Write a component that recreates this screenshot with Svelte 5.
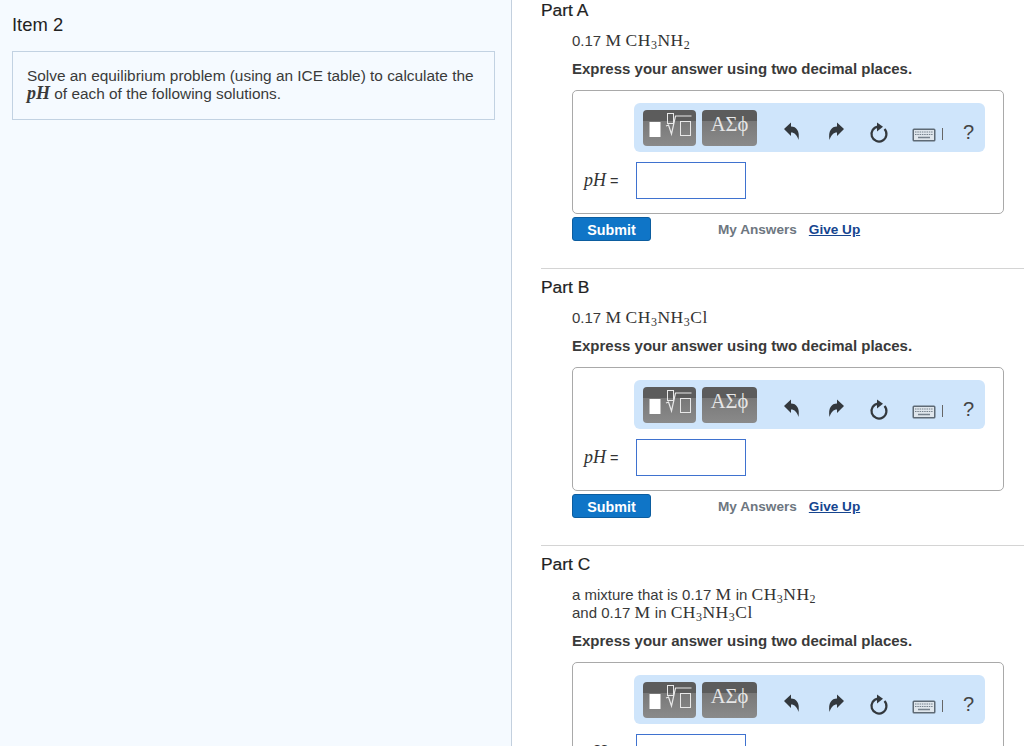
<script lang="ts">
	const answer = 'Express your answer using two decimal places.'
</script>

{#snippet ch3nh2()}
	<span class="math">CH<sub>3</sub>NH<sub>2</sub></span>
{/snippet}

{#snippet ch3nh3cl()}
	<span class="math">CH<sub>3</sub>NH<sub>3</sub>Cl</span>
{/snippet}

{#snippet toolbar()}
	<div class="toolbar">
		<div class="tool templates">
			<svg width="53" height="36" viewBox="0 0 53 36" fill="none">
				<rect x="6.5" y="12" width="11" height="15" fill="#fff" />
				<rect x="24.5" y="3.5" width="6" height="10" stroke="#e8e8e8" />
				<path d="M23 16l2.500-1 3 9 4-18h16" stroke="#e8e8e8" stroke-width="1.200" />
				<rect x="37.5" y="11.5" width="10" height="14" stroke="#e8e8e8" />
			</svg>
		</div>
		<div class="tool symbols">ΑΣϕ</div>
		<div class="action first">
			<svg width="18" height="20" viewBox="0 0 18 20">
				<path d="M1 8L8 1.500V5.500C13.500 5.500 17 10 15.500 19 14 14 11.500 11.500 8 11.500V15z" fill="#33383d" />
			</svg>
		</div>
		<div class="action">
			<svg width="18" height="20" viewBox="0 0 18 20">
				<path d="M17 8L10 1.500V5.500C4.500 5.500 1 10 2.500 19 4 14 6.500 11.500 10 11.500V15z" fill="#33383d" />
			</svg>
		</div>
		<div class="action reset">
			<svg width="22" height="24" viewBox="0 0 22 24" fill="none">
				<path d="M10 6.600A7.500 7.500 0 1 0 16.500 9" stroke="#33383d" stroke-width="2.200" />
				<path d="M9 2.500L15 6.800 9 11.500z" fill="#33383d" />
			</svg>
		</div>
		<div class="action keyboard">
			<svg width="24" height="14" viewBox="0 0 24 14">
				<rect x=".5" y=".5" width="23" height="13" rx="1.500" fill="#5e6a75" />
				<rect x="2" y="2" width="20" height="10" fill="#dfe6ec" />
				<path d="M3 4h18M3 6.500h18" stroke="#76828d" stroke-dasharray="1.500 .8" />
				<path d="M6 9.500h12" stroke="#76828d" stroke-width="1.500" />
			</svg>
		</div>
		<span class="pipe"></span>
		<span class="help">?</span>
	</div>
{/snippet}

{#snippet part(title, statement)}
	<section class="part">
		<h2>{title}</h2>
		<div class="statement">{@render statement()}</div>
		<p class="instruction">{answer}</p>
		<div class="editor">
			{@render toolbar()}
			<div class="answer-row">
				<span class="label"><i>pH</i> =</span>
				<div class="answer-input"></div>
			</div>
		</div>
		<div class="actions">
			<button class="submit">Submit</button>
			<span class="my-answers">My Answers</span>
			<a href="#give-up" class="give-up">Give Up</a>
		</div>
	</section>
{/snippet}

{#snippet partA()}0.17 <span class="math">M</span> {@render ch3nh2()}{/snippet}
{#snippet partB()}0.17 <span class="math">M</span> {@render ch3nh3cl()}{/snippet}
{#snippet partC()}
	a mixture that is 0.17 <span class="math">M</span> in {@render ch3nh2()}<br />
	and 0.17 <span class="math">M</span> in {@render ch3nh3cl()}
{/snippet}

<div class="page">
	<aside class="left">
		<h1>Item 2</h1>
		<div class="intro">
			Solve an equilibrium problem (using an ICE table) to calculate the
			<i class="ph">pH</i> of each of the following solutions.
		</div>
	</aside>
	<main class="right">
		{@render part('Part A', partA)}
		{@render part('Part B', partB)}
		{@render part('Part C', partC)}
	</main>
</div>

<style>
	:global(body) {
		margin: 0;
		background: #fff;
	}

	.page {
		display: flex;
		height: 746px;
		overflow: hidden;
		font-family: 'Liberation Sans', Arial, sans-serif;
		color: #3a3a3a;
	}

	.left {
		box-sizing: border-box;
		width: 512px;
		flex: none;
		padding: 14px 16px 0 12px;
		background: #f5faff;
		border-right: 1px solid #c3d0de;
	}

	h1 {
		margin: 0 0 15px;
		font-size: 18.4px;
		font-weight: 400;
		line-height: 22px;
		color: #222;
	}

	.intro {
		padding: 15px 14px 16px;
		border: 1px solid #c2d2e2;
		font-size: 15.4px;
		line-height: 18px;
	}

	.ph {
		font-family: 'Liberation Serif', serif;
		font-size: 18px;
		font-weight: 700;
		line-height: 0;
	}

	.right {
		flex: 1;
		min-width: 0;
		padding-left: 29px;
	}

	.part {
		height: 268px;
		margin-bottom: 8px;
		border-bottom: 1px solid #d4d4d4;
	}

	h2 {
		margin: 0;
		font-size: 17.4px;
		font-weight: 400;
		line-height: 20px;
		color: #222;
		-webkit-text-stroke: 0.2px #222;
	}

	.statement {
		margin: 12px 0 0 31px;
		font-size: 15px;
		line-height: 18px;
	}

	.math {
		font-family: 'Liberation Serif', serif;
		font-size: 17.5px;
		letter-spacing: 0.5px;
		line-height: 0;
		color: #333;
	}

	sub {
		font-size: 12px;
		line-height: 0;
		vertical-align: -3px;
	}

	.instruction {
		margin: 10px 0 0 31px;
		font-size: 15px;
		font-weight: 700;
		line-height: 18px;
		color: #3a3a3a;
	}

	.editor {
		box-sizing: border-box;
		width: 432px;
		height: 124px;
		margin: 12px 0 0 31px;
		padding: 12px 18px 0 61px;
		border: 1.5px solid #a9a9a9;
		border-radius: 5px;
	}

	.toolbar {
		display: flex;
		align-items: flex-start;
		box-sizing: border-box;
		height: 49px;
		padding: 7px 0 0 9px;
		background: #cfe5fb;
		border-radius: 6px;
	}

	.tool {
		box-sizing: border-box;
		height: 36px;
		border-radius: 4px;
		background: linear-gradient(#5c5c5c 0 11px, #787878 11px, #8a8a8a 100%);
	}

	.templates {
		width: 53px;
	}

	.templates svg {
		display: block;
	}

	.symbols {
		width: 55px;
		margin-left: 6px;
		padding-top: 2px;
		font-family: 'Liberation Serif', serif;
		font-size: 20.5px;
		line-height: 24px;
		text-align: center;
		color: #e6e6e6;
	}

	.action {
		display: flex;
		justify-content: center;
		width: 44px;
		margin-top: 11px;
	}

	.first {
		margin-left: 13px;
	}

	.reset {
		margin: 10px 0 0 -1px;
	}

	.keyboard {
		margin: 18px 0 0 1px;
	}

	.pipe {
		width: 1px;
		height: 12px;
		margin: 18px 0 0 -4px;
		background: #666;
	}

	.help {
		margin: 10px 0 0 20px;
		font-size: 20px;
		line-height: 24px;
		color: #444;
	}

	.answer-row {
		display: flex;
		align-items: center;
		margin: 10px 0 0 -50px;
	}

	.label {
		width: 52px;
		font-size: 14.5px;
		color: #333;
	}

	.label i {
		font-family: 'Liberation Serif', serif;
		font-size: 18px;
	}

	.answer-input {
		box-sizing: border-box;
		width: 110px;
		height: 37px;
		background: #fff;
		border: 1.5px solid #3f72cf;
	}

	.actions {
		display: flex;
		align-items: center;
		margin: 3px 0 0 31px;
		font-size: 13.6px;
		font-weight: 700;
	}

	.submit {
		box-sizing: border-box;
		width: 79px;
		height: 24px;
		padding: 1px 0 0;
		background: #0f75c7;
		border: 1px solid #0c5d9f;
		border-radius: 3px;
		font: 700 14.3px 'Liberation Sans', Arial, sans-serif;
		color: #fff;
	}

	.my-answers {
		margin: 1px 0 0 67px;
		color: #6d7680;
	}

	.give-up {
		margin: 1px 0 0 12px;
		color: #16458f;
	}
</style>
